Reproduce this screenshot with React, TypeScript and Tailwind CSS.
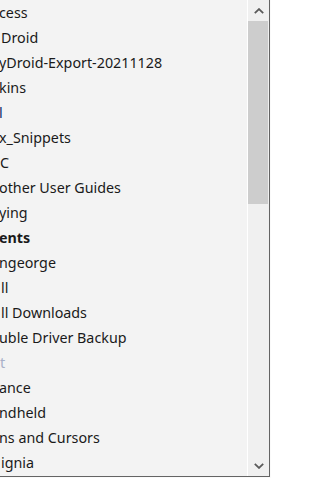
import React from 'react';

interface Row {
  text: string;
  shift?: string;
  bold?: boolean;
  tint?: string;
}

// folder names, clipped on the left by the panel edge
const rows: Row[] = [
  { text: 'cess', shift: '-ml-[1px]' },
  { text: 'Droid', shift: 'ml-[1px]' },
  { text: 'yDroid-Export-20211128', shift: '-ml-[1px]' },
  { text: 'kins', shift: '-ml-[1px]' },
  { text: 'l', shift: '-ml-[1px]', tint: 'text-[#0a2d6b]' },
  { text: 'x_Snippets', shift: '-ml-[1px]' },
  { text: 'C' },
  { text: 'other User Guides', shift: '-ml-[1px]' },
  { text: 'ying', shift: '-ml-[1px]' },
  { text: 'ents', bold: true, shift: '-ml-[1px]' },
  { text: 'ngeorge', shift: '-ml-[1px]' },
  { text: 'll', shift: 'ml-[1px]' },
  { text: 'll Downloads', shift: 'ml-[1px]' },
  { text: 'uble Driver Backup', shift: '-ml-[1px]' },
  { text: 't', tint: 'text-[#a8b0c8]' },
  { text: 'ance', shift: '-ml-[1px]' },
  { text: 'ndheld', shift: '-ml-[1px]' },
  { text: 'ns and Cursors', shift: '-ml-[1px]' },
  { text: 'ignia', shift: 'ml-[1px]' },
];

const Chevron: React.FC<{ up?: boolean }> = ({ up }) => (
  <svg width="10" height="6" viewBox="0 0 10 6" className={up ? '' : 'rotate-180'}>
    <path d="M0.8 5.2 L5 1.1 L9.2 5.2" fill="none" stroke="#5a5a5a" strokeWidth="1.8" />
  </svg>
);

const App: React.FC = () => {
  return (
    <div className="w-[271px] h-[478px] bg-[#fafafa] pr-px pb-px overflow-hidden">
      <div className="flex h-full border-r border-b border-[#646464] bg-[#f3f3f3]">
        {/* list */}
        <div
          className="flex-1 overflow-hidden"
          style={{ fontFamily: '"Noto Sans", "Open Sans", sans-serif' }}
        >
          {rows.map((row, i) => (
            <div key={i} className="h-[25px] pt-px flex items-center whitespace-nowrap">
              <span
                className={`${row.shift ?? ''} text-[14.3px] leading-none ${
                  row.bold ? 'font-bold' : 'font-normal'
                } ${row.tint ?? 'text-[#1a1a1a]'}`}
              >
                {row.text}
              </span>
            </div>
          ))}
        </div>

        {/* scrollbar */}
        <div className="w-[22px] border-l border-white bg-[#f0f0f0] flex flex-col">
          <div className="h-[21px] flex items-center justify-center">
            <Chevron up />
          </div>
          <div className="h-[183px] mr-px bg-[#cdcdcd]" />
          <div className="flex-1" />
          <div className="h-[21px] flex items-center justify-center">
            <Chevron />
          </div>
        </div>
      </div>
    </div>
  );
};

export default App;
